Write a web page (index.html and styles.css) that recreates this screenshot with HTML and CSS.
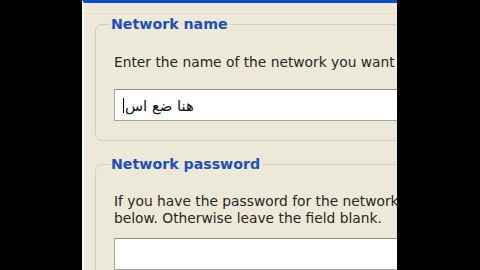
FILE: index.html
```html
<!DOCTYPE html>
<html>
<head>
<meta charset="utf-8">
<link rel="stylesheet" href="styles.css">
</head>
<body>
<div class="panel">
  <div class="rule"></div>
  <fieldset class="group group-name">
    <legend class="title">Network name</legend>
    <p class="desc">Enter the name of the network you want</p>
    <div class="field">
      <span class="caret"></span><span class="value" dir="rtl">هنا ضع اس</span>
    </div>
  </fieldset>
  <fieldset class="group group-pass">
    <legend class="title">Network password</legend>
    <p class="desc">If you have the password for the network<br>below. Otherwise leave the field blank.</p>
    <div class="field"></div>
  </fieldset>
</div>
</body>
</html>
```
FILE: styles.css
```css
html, body {
  margin: 0;
  padding: 0;
  background: #000;
  width: 480px;
  height: 270px;
  overflow: hidden;
}
body {
  display: flex;
  padding-left: 82px;
  box-sizing: border-box;
}
.panel {
  width: 315px;
  height: 270px;
  box-sizing: border-box;
  background: #ECE9D8;
  border-top: 3px solid #0B4BD6;
  border-left: 2px solid #F7F6EF;
  overflow: hidden;
  font-family: "DejaVu Sans", sans-serif;
  color: #262626;
}
.rule {
  margin-top: 10px;
  height: 1px;
  background: #DDDACB;
}
.group {
  margin: 2px -40px 0 11px;
  padding: 21px 0 19px 18px;
  border: 1px solid #D0D0BF;
  border-radius: 7px;
  min-width: 0;
}
.group-pass {
  margin-top: 15px;
  padding-top: 20px;
}
.title {
  margin-left: -5px;
  padding: 0 2px;
  font-size: 14.2px;
  line-height: 17px;
  font-weight: bold;
  color: #1F4FB9;
}
.desc {
  margin: 0;
  font-size: 13.8px;
  line-height: 17px;
  white-space: nowrap;
}
.field {
  margin-top: 18px;
  height: 32px;
  box-sizing: border-box;
  background: #fff;
  border: 1px solid #A5A59C;
  border-top-color: #8E8E88;
  display: flex;
  align-items: center;
  padding-left: 8px;
}
.group-pass .field {
  margin-top: 11px;
}
.caret {
  width: 1px;
  height: 15px;
  background: #000;
  margin-right: 1px;
}
.value {
  font-family: "DejaVu Sans", sans-serif;
  font-size: 14.8px;
  color: #111;
}
```
